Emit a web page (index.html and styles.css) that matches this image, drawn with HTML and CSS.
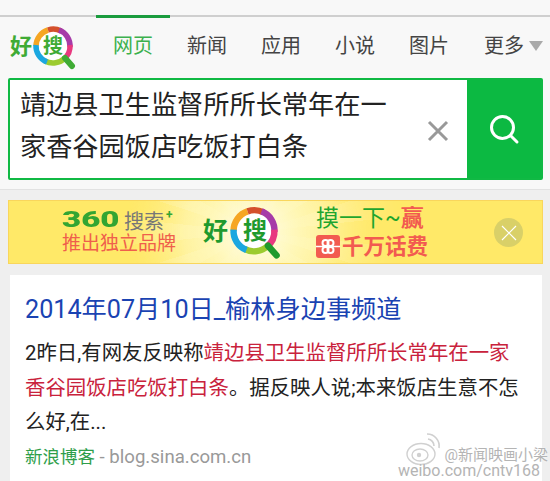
FILE: index.html
```html
<!DOCTYPE html>
<html lang="en">
<head>
  <meta charset="UTF-8">
  <meta name="viewport" content="width=device-width, initial-scale=1.0">
  <title>好搜</title>
  <link rel="stylesheet" href="styles.css">
</head>
<body>
  <div class="page">
    <header class="header">
      <div class="top-strip"></div>
      <nav class="nav">
        <div class="logo">
          <span class="logo-hao">好</span>
          <div class="logo-ring">
            <svg width="46" height="50" viewBox="0 0 46 50">
              <circle cx="23" cy="21" r="17" fill="#fff"/>
              <path d="M6 21 A17 17 0 0 1 18 5" fill="none" stroke="#f6a623" stroke-width="5.5"/>
              <path d="M18 5 A17 17 0 0 1 31 6" fill="none" stroke="#d4502c" stroke-width="5.5"/>
              <path d="M29 5 A17 17 0 0 1 40 22" fill="none" stroke="#a63ba8" stroke-width="5.5"/>
              <path d="M40 20 A17 17 0 0 1 34 34" fill="none" stroke="#e8397f" stroke-width="5.5"/>
              <path d="M35 33 A17 17 0 0 1 15 36" fill="none" stroke="#9ccb2f" stroke-width="5.5"/>
              <path d="M17 37 A17 17 0 0 1 6 20" fill="none" stroke="#1ba7e0" stroke-width="5.5"/>
              <path d="M35 33 L42 41" fill="none" stroke="#3fab35" stroke-width="6" stroke-linecap="round"/>
            </svg>
            <span class="logo-sou">搜</span>
          </div>
        </div>
        <a class="tab active">网页</a>
        <a class="tab">新闻</a>
        <a class="tab">应用</a>
        <a class="tab">小说</a>
        <a class="tab">图片</a>
        <a class="tab more">更多<i class="caret"></i></a>
      </nav>
      <form class="search">
        <div class="search-input">
          <div class="query">靖边县卫生监督所所长常年在一家香谷园饭店吃饭打白条</div>
          <svg class="clear" width="22" height="22" viewBox="0 0 22 22">
            <path d="M2 2 L20 20 M20 2 L2 20" stroke="#999" stroke-width="3"/>
          </svg>
        </div>
        <button class="search-btn" type="button">
          <svg width="32" height="32" viewBox="0 0 32 32">
            <circle cx="14.5" cy="14.5" r="11" fill="none" stroke="#fff" stroke-width="3"/>
            <path d="M22.5 22.5 L29 29" stroke="#fff" stroke-width="3" stroke-linecap="round"/>
          </svg>
        </button>
      </form>
    </header>

    <div class="banner">
      <div class="banner-left">
        <div class="brand-line"><span class="brand-360">360</span><span class="brand-name">搜索</span><span class="brand-plus">+</span></div>
        <div class="brand-sub">推出独立品牌</div>
      </div>
      <div class="banner-logo">
        <span class="banner-hao">好</span>
        <div class="banner-ring">
          <svg width="54" height="58" viewBox="0 0 50 54">
            <circle cx="25" cy="23" r="19" fill="#fff"/>
            <path d="M6 23 A19 19 0 0 1 19 5" fill="none" stroke="#f6a623" stroke-width="6"/>
            <path d="M19 5 A19 19 0 0 1 34 6" fill="none" stroke="#d4502c" stroke-width="6"/>
            <path d="M32 5 A19 19 0 0 1 44 24" fill="none" stroke="#a63ba8" stroke-width="6"/>
            <path d="M44 22 A19 19 0 0 1 37 38" fill="none" stroke="#e8397f" stroke-width="6"/>
            <path d="M38 37 A19 19 0 0 1 16 40" fill="none" stroke="#9ccb2f" stroke-width="6"/>
            <path d="M18 41 A19 19 0 0 1 6 22" fill="none" stroke="#1ba7e0" stroke-width="6"/>
            <path d="M38 37 L46 46" fill="none" stroke="#1f9a2e" stroke-width="6" stroke-linecap="round"/>
          </svg>
          <span class="banner-sou">搜</span>
        </div>
      </div>
      <div class="banner-right">
        <div class="promo-top">摸一下~<span class="promo-win">赢</span></div>
        <div class="promo-bottom">
          <svg class="gift" width="24" height="23" viewBox="0 0 24 23">
            <rect width="24" height="23" rx="3" fill="#f25b50"/>
            <path d="M0 11.5 H24" stroke="#fff" stroke-width="1.5"/>
            <circle cx="9.5" cy="8" r="3" fill="none" stroke="#fff" stroke-width="2"/>
            <circle cx="14.5" cy="8" r="3" fill="none" stroke="#fff" stroke-width="2"/>
            <circle cx="9.5" cy="15" r="3" fill="none" stroke="#fff" stroke-width="2"/>
            <circle cx="14.5" cy="15" r="3" fill="none" stroke="#fff" stroke-width="2"/>
          </svg>
          <span>千万话费</span>
        </div>
      </div>
      <div class="banner-close">
        <svg width="16" height="16" viewBox="0 0 16 16">
          <path d="M1 1 L15 15 M15 1 L1 15" stroke="#fff" stroke-width="1.2"/>
        </svg>
      </div>
    </div>

    <div class="result">
      <a class="result-title">2014年07月10日_榆林身边事频道</a>
      <p class="result-text">2昨日,有网友反映称<em>靖边县卫生监督所所长常年在一家香谷园饭店吃饭打白条</em>。据反映人说;本来饭店生意不怎么好,在...</p>
      <div class="result-source"><span class="site-name">新浪博客</span> - blog.sina.com.cn</div>
    </div>
  </div>

  <div class="watermark">
    <svg class="weibo" width="36" height="36" viewBox="0 0 36 36">
      <ellipse cx="16" cy="23" rx="14" ry="10.5" fill="none" stroke="#d0d0d0" stroke-width="1.4"/>
      <ellipse cx="15" cy="24" rx="8" ry="6" fill="none" stroke="#d0d0d0" stroke-width="1.4"/>
      <circle cx="14" cy="24" r="2.2" fill="#d0d0d0"/>
      <path d="M22 3 A12 12 0 0 1 34 17 M23 8 A7 7 0 0 1 29 15" fill="none" stroke="#d0d0d0" stroke-width="1.6"/>
    </svg>
    <div class="mark-text">
      <div class="mark-name">@新闻映画小梁</div>
      <div class="mark-url">weibo.com/cntv168</div>
    </div>
  </div>
</body>
</html>
```
FILE: styles.css
```css
* {
  box-sizing: border-box;
}
html, body {
  margin: 0;
  padding: 0;
}
body {
  width: 550px;
  height: 481px;
  overflow: hidden;
  position: relative;
  background-color: #efefef;
  font-family: Roboto, "Noto Sans CJK SC", sans-serif;
}
.page {
  height: 481px;
  overflow: hidden;
}
.header {
  background-color: #f8f8f8;
  height: 190px;
  border-bottom: 1px solid #e2e2e2;
}
.top-strip {
  height: 17px;
  border-bottom: 2px solid #cfcfcf;
}
.nav {
  display: flex;
  align-items: flex-start;
  height: 63px;
  margin-top: -2px;
  padding-left: 10px;
}
.logo {
  display: flex;
  align-items: flex-start;
  width: 86px;
  margin-top: 10px;
}
.logo-hao {
  color: #3fab35;
  font-size: 22px;
  font-weight: 700;
  line-height: 1;
  width: 20px;
  margin-top: 11px;
}
.logo-ring {
  position: relative;
  width: 46px;
  height: 50px;
}
.logo-sou {
  position: absolute;
  left: 13px;
  top: 11px;
  font-size: 20px;
  font-weight: 700;
  line-height: 1;
  color: #3fab35;
}
.tab {
  width: 74px;
  padding-left: 17px;
  font-size: 20px;
  line-height: 56px;
  color: #444;
  border-top: 3px solid transparent;
  white-space: nowrap;
}
.tab.active {
  color: #3cb14e;
  border-top-color: #1a9c3e;
}
.tab.more {
  display: flex;
  align-items: center;
  padding-left: 18px;
}
.caret {
  margin-left: 5px;
  border-left: 7px solid transparent;
  border-right: 7px solid transparent;
  border-top: 10px solid #aaa;
}
.search {
  display: flex;
  height: 102px;
  margin: 0 7px 0 8px;
  border: 2px solid #10b944;
  border-radius: 2px;
}
.search-input {
  flex: 1;
  display: flex;
  align-items: center;
  background-color: #fff;
  padding-left: 10px;
}
.query {
  width: 393px;
  padding-right: 16px;
  font-size: 26.2px;
  line-height: 42px;
  color: #222;
  margin-top: -7px;
}
.clear {
  margin-left: 14px;
  margin-top: 3px;
}
.search-btn {
  width: 74px;
  border: none;
  padding: 0;
  background-color: #0cb942;
  display: flex;
  align-items: center;
  justify-content: center;
}
.banner {
  position: relative;
  display: flex;
  height: 64px;
  margin: 10px 7px 0 8px;
  border: 1px solid #f9d65c;
  background-color: #ffe968;
}
/* sun rays behind the logo */
.banner::before {
  content: "";
  position: absolute;
  inset: 0;
  background:
    radial-gradient(circle at 245px 31px, #fffde8 0, rgba(255, 248, 190, 0.9) 45px, rgba(255, 233, 104, 0) 130px),
    repeating-conic-gradient(from 0deg at 245px 31px, rgba(255, 255, 255, 0.22) 0 12deg, rgba(255, 255, 255, 0) 12deg 24deg);
  -webkit-mask-image: radial-gradient(circle at 245px 31px, #000 70px, transparent 150px);
  mask-image: radial-gradient(circle at 245px 31px, #000 70px, transparent 150px);
}
.banner > * {
  position: relative;
}
.banner-left {
  width: 194px;
  padding: 8px 0 0 53px;
}
.brand-line {
  display: flex;
  align-items: center;
  height: 22px;
}
.brand-360 {
  display: inline-block;
  width: 58px;
  color: #33a532;
  font-size: 22px;
  font-weight: 900;
  line-height: 20px;
  transform: scaleX(1.5);
  transform-origin: left center;
}
.brand-name {
  font-size: 20px;
  color: #777;
  margin-left: 4px;
}
.brand-plus {
  font-size: 12px;
  font-weight: 700;
  line-height: 12px;
  color: #33a532;
  margin-left: 2px;
  align-self: flex-start;
}
.brand-sub {
  font-size: 19px;
  line-height: 26px;
  color: #ef5f4c;
}
.banner-logo {
  display: flex;
  align-items: flex-start;
  width: 113px;
}
.banner-hao {
  width: 24px;
  margin-top: 18px;
  font-size: 25px;
  font-weight: 700;
  line-height: 1;
  color: #1f9a2e;
}
.banner-ring {
  position: relative;
  width: 54px;
  height: 58px;
  margin-top: 5px;
}
.banner-sou {
  position: absolute;
  left: 16px;
  top: 13px;
  font-size: 24px;
  font-weight: 700;
  line-height: 1;
  color: #1f9a2e;
}
.banner-right {
  padding-top: 3px;
}
.promo-top {
  font-size: 23px;
  line-height: 30px;
  height: 30px;
  color: #1fa52e;
}
.promo-win {
  color: #f25b50;
  font-weight: 700;
}
.promo-bottom {
  display: flex;
  align-items: center;
  gap: 2px;
  margin-top: 1px;
  font-size: 21.5px;
  font-weight: 700;
  line-height: 23px;
  color: #f25b50;
}
.banner-close {
  position: absolute;
  left: 485px;
  top: 17px;
  width: 29px;
  height: 29px;
  border-radius: 50%;
  background-color: #d9d068;
  display: flex;
  align-items: center;
  justify-content: center;
}
.result {
  margin: 11px 8px 0 10px;
  height: 220px;
  padding: 17px 15px 0 15px;
  background-color: #fff;
}
.result-title {
  display: block;
  font-size: 25.2px;
  line-height: 36px;
  color: #1a43b2;
  white-space: nowrap;
}
.result-text {
  width: 500px;
  margin: 8px 0 0;
  font-size: 20.4px;
  line-height: 34.5px;
  color: #222;
}
.result-text em {
  font-style: normal;
  color: #c9223c;
}
.result-source {
  margin-top: 5px;
  font-size: 18.6px;
  line-height: 24px;
  color: #999;
}
.site-name {
  font-size: 17.5px;
  color: #2e9e4a;
}
.watermark {
  position: absolute;
  left: 402px;
  top: 431px;
  width: 148px;
  height: 50px;
}
.weibo {
  position: absolute;
  left: 3px;
  top: 0;
}
.mark-text {
  position: absolute;
  right: 2px;
  top: 16px;
  text-align: right;
  color: #b4b4b4;
  text-shadow: 0 0 2px #fff;
  white-space: nowrap;
}
.mark-name {
  font-size: 15px;
  line-height: 16px;
}
.mark-url {
  margin-right: 8px;
  font-size: 16px;
  line-height: 16px;
}
```
